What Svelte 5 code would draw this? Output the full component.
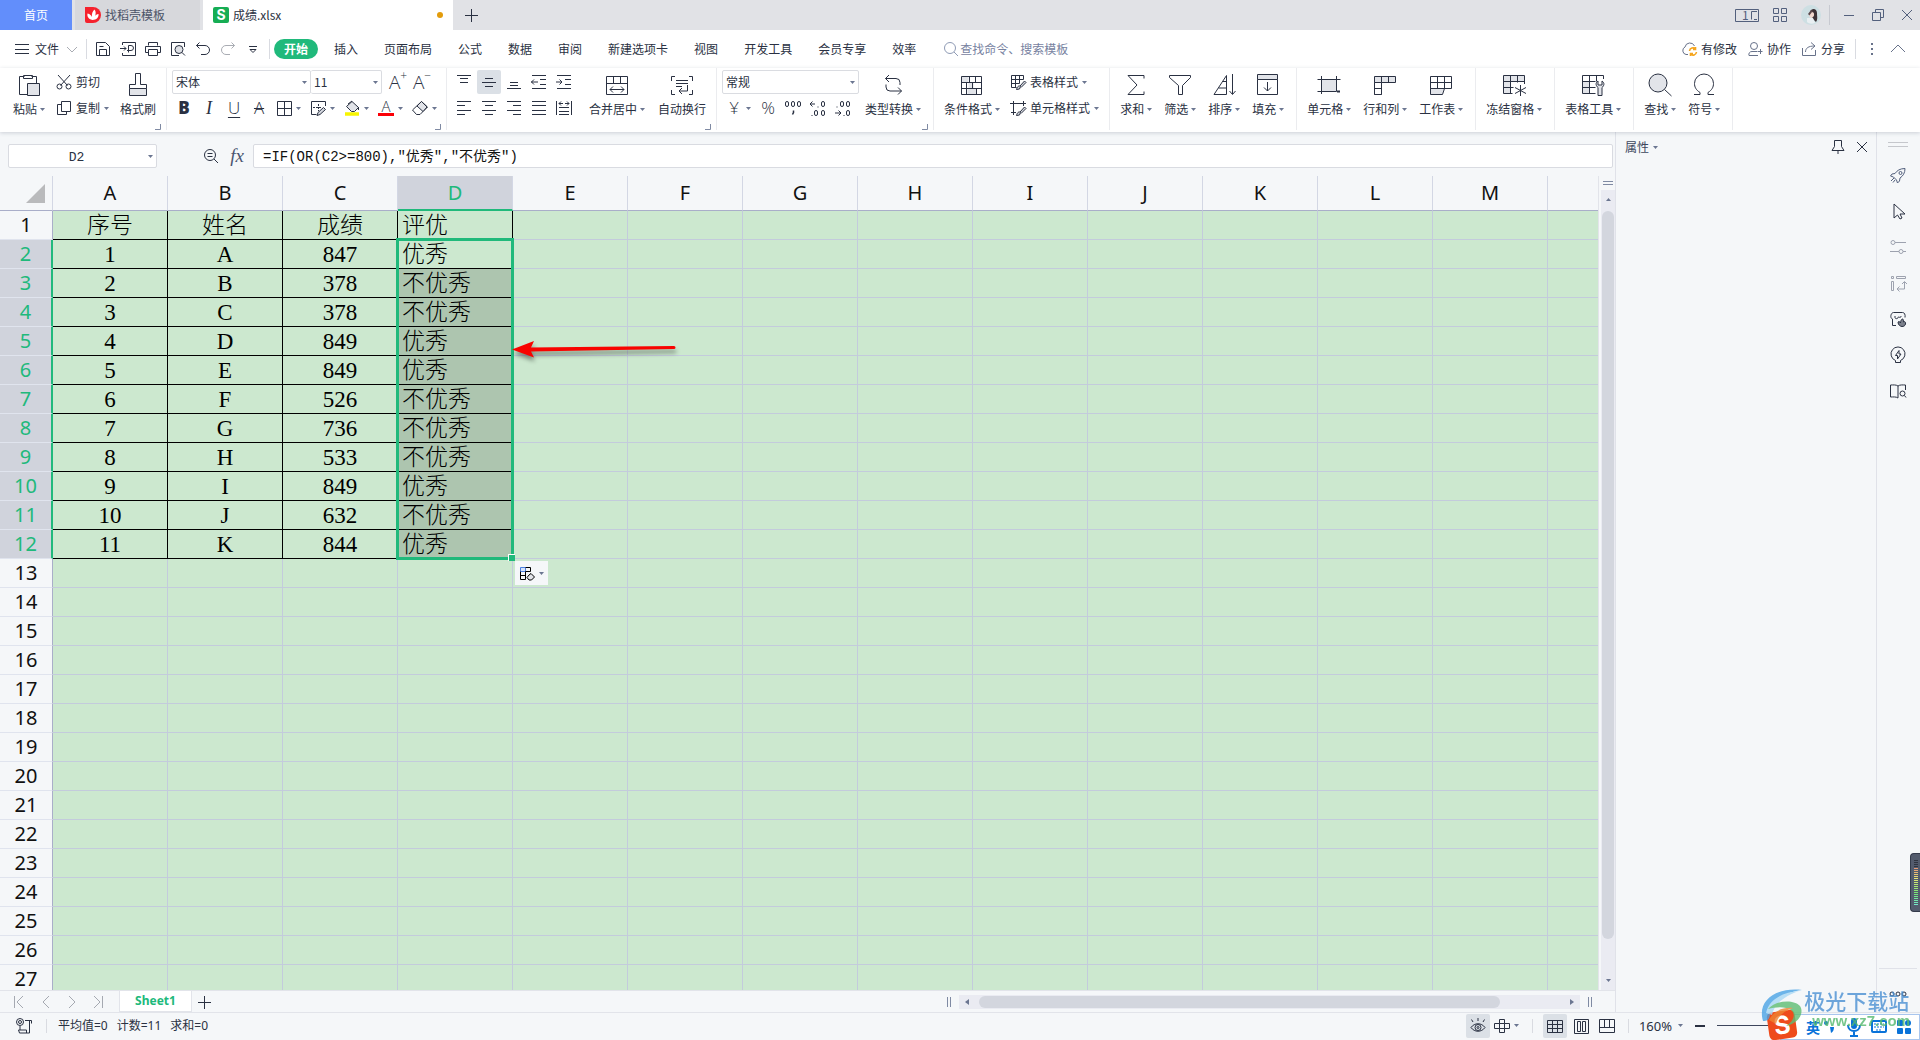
<script lang="ts">
	interface Tool {
		icon: string;
		label: string;
		caret?: boolean;
	}

	const icons: Record<string, string> = {
		// quick access
		menu: '<path d="M1 3.500h14M1 8.500h14M1 12.500h14"/>',
		save: '<path d="M1.500 1.500h9l4 4v9h-13zM4.500 14.500v-6h7v6M4.500 5.500h4"/>',
		pdf: '<path d="M2.500 4V1.500h13v13h-13V12M0 7.500h6M4 5.500l2 2-2 2M8.500 11.500v-7h2.500a2 2 0 0 1 0 5H7"/>',
		print: '<path d="M3.500 4.500v-3h9v3M3.500 11.500h-3v-6h15v6h-3M3.500 8.500h9v6h-9z"/>',
		preview: '<path d="M14.500 6V1.500h-13v13H9"/><circle cx="9" cy="8.500" r="4" fill="#dfe1e6"/><path d="M12 11.500l3 3"/>',
		undo: '<path d="M4.500 1.500l-3 3 3 3M1.500 4.500h8.500a4.500 4.500 0 0 1 0 9H6"/>',
		redo: '<path d="M11.500 1.500l3 3-3 3M14.500 4.500H6a4.500 4.500 0 0 0 0 9h4"/>',
		more: '<path d="M4 5.500h8M5 8.500l3 3 3-3z"/>',
		chevronDown: '<path d="M3 6l5 5 5-5"/>',
		chevronUp: '<path d="M1 11l7-7 7 7"/>',
		search: '<circle cx="7" cy="7" r="5.500"/><path d="M11 11l4 4"/>',
		cloud: '<path d="M7 13.500H5a4 4 0 0 1-1-7.500 5 5 0 0 1 9.500-1"/><path d="M8.500 10a3.500 3.500 0 0 1 6-2M15.500 11a3.500 3.500 0 0 1-6 2M14.500 6v2.500H12M9.500 15v-2.500H12" stroke="#f5a51d" stroke-width="1.600"/>',
		user: '<circle cx="7" cy="5" r="3.500"/><path d="M10 10.500H5a3 3 0 0 0-3 4h9M10.500 10.500h5M13.500 8v5"/>',
		share: '<path d="M1.500 7v7.500h13V9M4.500 11c0-4 3-6 9-6M10 1.500l4 3.500-4 3.500"/>',
		dots: '<g fill="currentColor" stroke="none"><rect x="7" y="2" width="2" height="2"/><rect x="7" y="7" width="2" height="2"/><rect x="7" y="12" width="2" height="2"/></g>',
		// clipboard
		paste: '<path d="M7.500 3.500h-5v18h8M14.500 3.500h5v7"/><path d="M6.500 2.500h9v3h-9z"/><path d="M10.500 10.500h12v12h-12z" fill="#e2e4e9"/>',
		cut: '<path d="M2 1l9.500 10.500M14 1L4.500 11.500"/><circle cx="3.500" cy="12.500" r="2.500"/><circle cx="12.500" cy="12.500" r="2.500"/>',
		copy: '<path d="M5.500 1.500h9v10h-9zM5.500 4.500h-4v10h9v-3"/>',
		brush: '<path d="M3.500 15.500h17v7h-17z" fill="#e2e4e9"/><path d="M3.500 15.500v-4h6v-11h5v11h6v4"/>',
		// font
		borders: '<path d="M1.500 1.500h14v14h-14zM8.500 1.500v14M1.500 8.500h14"/>',
		drawBorder: '<path d="M15.500 6V1.500h-14v13h5"/><path d="M3 7.500h8M8.500 4v7" stroke-dasharray="2 1"/><path d="M7 15.500l1-3 5.500-5 2 2-5.500 5z" fill="#d4d7de"/>',
		fill: '<path d="M8 1.500L2.500 6.500l5 5h3l4-4z" fill="#e2e4e9"/><path d="M8 1l-4 3M14.500 7v3"/><path d="M1 14h14" stroke="#f7f500" stroke-width="3.500"/>',
		eraser: '<path d="M.5 10L9.500 1.500l6 5.500-7.500 7.500H4.500z"/><path d="M5 6l6 5.500 4-4.500-5.500-5.500z" fill="#e2e4e9"/>',
		// alignment
		top: '<path d="M1 1.500h14M4 4.500h8M4 8.500h8"/>',
		middle: '<path d="M4 4.500h8M1 8.500h14M4 12.500h8"/>',
		bottom: '<path d="M4 8.500h8M4 11.500h8M1 14.500h14"/>',
		outdent: '<path d="M1 1.500h14M9 5.500h6M9 10.500h6M1 14.500h14M0 8h7M3 5.500L.500 8 3 10.500"/>',
		indent: '<path d="M1 1.500h14M9 5.500h6M9 10.500h6M1 14.500h14M0 8h6M3.500 5.500L6 8l-2.500 2.500"/>',
		left: '<path d="M1 1.500h14M1 5.500h8M1 10.500h14M1 14.500h8"/>',
		center: '<path d="M1 1.500h14M4 5.500h8M1 10.500h14M4 14.500h8"/>',
		right: '<path d="M1 1.500h14M7 5.500h8M1 10.500h14M7 14.500h8"/>',
		justify: '<path d="M1 1.500h14M1 5.500h14M1 10.500h14M1 14.500h14"/>',
		distribute: '<path d="M.500 1v14M15.500 1v14M3 7.500h10M3 11.500h10M3 14.500h10M3 3.500h4M9 3.500h4M5 1.500l-2 2 2 2M11 1.500l2 2-2 2"/>',
		merge: '<path d="M1.500 3.500h21v18h-21zM1.500 10.500h21M8.500 3.500v7M15.500 3.500v7M5 16.500h14M8 13.500l-3 3 3 3M16 13.500l3 3-3 3"/>',
		wrap: '<path d="M5 3.500H1.500V8M19 3.500h3.500V8M5 21.500H1.500V17M19 21.500h3.500V17M6 7.500h12M6 10.500h12M6 13.500h6M17.500 12v6H9M12 15l-3 3 3 3"/>',
		// number
		incDecimal: '<path d="M0 4h5M2.500 1.500L0 4l2.500 2.500M8 6.500v1"/><rect x="11.500" y="1.500" width="3" height="5" rx="1.500"/><rect x="4.500" y="10.500" width="3" height="5" rx="1.500"/><rect x="11.500" y="10.500" width="3" height="5" rx="1.500"/><path d="M2 15v1"/>',
		decDecimal: '<path d="M0 13h6M3.500 10.500L6 13l-2.500 2.500M9 15v1M2 6.500v1"/><rect x="5.500" y="1.500" width="3" height="5" rx="1.500"/><rect x="11.500" y="1.500" width="3" height="5" rx="1.500"/><rect x="11.500" y="10.500" width="3" height="5" rx="1.500"/>',
		thousands: '<rect x=".500" y="1.500" width="3" height="5" rx="1.500"/><rect x="6.500" y="1.500" width="3" height="5" rx="1.500"/><rect x="12.500" y="1.500" width="3" height="5" rx="1.500"/><path d="M8.500 10.500v2l-1 2" stroke-width="1.500"/>',
		convert: '<path d="M8 2L4.500 5.500 8 9M4.500 5.500H15a4 4 0 0 1 4 4V12M17 14.500l3.500 3.500-3.500 3.500M20.500 18H9a4 4 0 0 1-4-4v-2.500"/>',
		// styles
		condition: '<path d="M1.500 3.500h7v6h-7zM8.500 9.500h5v6h-5zM7.500 15.500h9v6h-9z" fill="#e2e4e9" stroke="none"/><path d="M1.500 3.500h20v18h-20zM1.500 9.500h20M1.500 15.500h20M9.500 3.500v6M15.500 3.500v6M6.500 9.500v12M12.500 9.500v6M16.500 15.500v6"/>',
		tableStyle: '<path d="M1.500 1.500h12v4M1.500 1.500v12h5M1.500 5.500h12M1.500 9.500h8M5.500 1.500v12M9.500 1.500v8"/><path d="M6.500 15.500c1-4 3-4 4-3l-1 2.500zM10 12l4.500-5 1.500 1.500-5 5" fill="#d4d7de"/>',
		cellStyle: '<path d="M0 3.500h16M3.500 1v14M13.500 1v5M1 12.500h5"/><path d="M6.500 15.500c1-4 3-4 4-3l-1 2.500zM10 12l4.500-5 1.500 1.500-5 5" fill="#d4d7de"/>',
		// editing
		sum: '<path d="M20 5.500v-3H4l9 9.500-9 9.500h16v-3"/>',
		filter: '<path d="M1.500 2.500h21v2l-8 8v9h-4v-9l-9-8z"/>',
		sort: '<path d="M2 21.500L14.500 2.500v19zM10.500 8.500h4M6.500 15h8M20.500 1v20M17.500 18l3 3.500 3-3.500"/>',
		fillDown: '<path d="M1.500 1.500h20v5h-20z" fill="#e2e4e9"/><path d="M1.500 6.500v15h20v-15M11.500 9v9M8 14.500l3.500 3.500 3.500-3.500"/>',
		cell: '<path d="M4.500 6.500h15v12h-15z" fill="#e2e4e9"/><path d="M.5 6.500h23M.5 18.500h18M4.500 3v18M19.500 3v14"/><path d="M20 18.500h3" stroke-width="2"/>',
		rowcol: '<path d="M1.500 3.500h21v6h-14v12h-7z" fill="#e2e4e9"/><path d="M1.500 9.500h7v12h-7z" fill="#fff"/><path d="M8.500 3.500v6M15.500 3.500v6M1.500 15.500h7"/>',
		worksheet: '<path d="M1.500 15.500h14l-2 6h-12z" fill="#e2e4e9"/><path d="M1.500 3.500h21v12h-21zM1.500 9.500h21M8.500 3.500v12M15.500 3.500v12"/>',
		freeze: '<path d="M1.500 2.500h21v6h-14v12h-7z" fill="#e2e4e9" stroke="none"/><path d="M22.500 11V2.500h-21v18h9M1.500 8.500h21M1.500 14.500h10M8.500 2.500v18M15.500 2.500v7M18.500 12v11M13 14.500l11 6M24 14.500l-11 6"/>',
		tableTool: '<path d="M1.500 8.500h7v12h-7z" fill="#e2e4e9" stroke="none"/><path d="M22.500 6V2.500h-21v18h13M1.500 8.500h13M1.500 14.500h13M8.500 2.500v18M15.500 2.500v6"/><path d="M17 8c-3 2-2 5 0 6.500v8h4v-8c2-1.500 3-4.500 0-6.500v4h-4z" fill="#e2e4e9"/>',
		find: '<circle cx="10" cy="10" r="9" fill="#e2e4e9"/><path d="M16.500 16.500l7 6.500"/>',
		symbol: '<path d="M2 21.500h6v-2C4 17 2.500 14 2.500 10.500a9.500 9.500 0 0 1 19 0c0 3.500-1.500 6.500-5.500 9v2h6"/>',
		// side panel
		pin: '<path d="M4.500 1.500h7v6l2.500 4H2l2.500-4zM8 11.500V15"/>',
		close: '<path d="M3 3l10 10M13 3L3 13"/>',
		rocket: '<path d="M15 1.500c-5 0-8 2-10 5l-3 .5L.500 9l3 1 3 3 1 3L9.500 14l.5-3c3-2 5-5 5-9.500z"/><circle cx="10.500" cy="6" r="1.500"/><path d="M4 11l-3 3M5 13l-2 2.500"/>',
		pointer: '<path d="M4 1v14l3.500-3 2.500 4 2-1-2-4h5z"/>',
		sliders: '<circle cx="3" cy="3.500" r="2"/><path d="M5 3.500h11M0 12.500h9M13 12.500h3"/><circle cx="11" cy="12.500" r="2"/>',
		transpose: '<path d="M1.500 1.500h2v2h-2zM6.500 1.500h9v2h-9zM1.500 6.500h2v9h-2zM14.500 7v7H7M12 9l2.500-2.500L17 9M9.500 11.500L7 14l2.500 2.500"/>',
		shop: '<path d="M6 14.500H2.500V8c-3-1-1.500-6.500 1-6.500h9c2 0 3 2 2.500 5M5 5v1.500c0 1.500 3 1.500 3 0s3 1.500 3-1.500"/><path d="M8 11c1-1 2 0 2.500 1 0-2 1-4 2-4s1 2 1 3c1-1 2.500 0 2 2s-2 2.500-3.500 2.500S8 14 8 11z" fill="currentColor" fill-opacity=".6"/>',
		bulb: '<path d="M5.500 15.500v-2a7 7 0 1 1 5 0v2zM9 3.500L5.500 8.500h2v3.500l3.500-5H9z"/>',
		book: '<path d="M8 14.500V3C6 1.500 3 2 .500 2v12c2.500 0 5.500-.5 7.500 1zM8 3c2-1.500 5-1 7.500-1v5"/><circle cx="12.500" cy="10.500" r="2.500"/><path d="M14.500 12.500l1.500 2"/>',
		// formula and status bars
		zoomOut: '<circle cx="7" cy="7" r="5.500"/><path d="M11 11l4 4M4.500 5.500h5M4.500 8.500h5"/>',
		first: '<path d="M2.500 2v12M11 2L5 8l6 6"/>',
		prev: '<path d="M11 2L5 8l6 6"/>',
		next: '<path d="M5 2l6 6-6 6"/>',
		last: '<path d="M4 2l6 6-6 6M12.500 2v12"/>',
		plus: '<path d="M8.500 2v13M2 8.500h13"/>',
		macro: '<circle cx="4" cy="4" r="3.500"/><circle cx="4" cy="4" r="1.500"/><path d="M9 2.500h6.500v3M13.500 3v12h-10l-1-3h8v3M4 8v4"/>',
		eye: '<path d="M1 9.500c3.500-5 10.500-5 14 0-3.500 5-10.500 5-14 0zM3 4L1.500 1.500M8 3V0M13 4l1.500-2.500"/><circle cx="8" cy="9.500" r="3"/><circle cx="8" cy="9.500" r="1"/>',
		cross: '<path d="M5.500 1.500h5v4h5v5h-5v4h-5v-4h-5v-5h5zM5.500 5.500h5v5h-5z"/>',
		grid: '<path d="M.500 2.500h15v12h-15zM.500 6.500h15M.500 10.500h15M5.500 2.500v12M10.500 2.500v12"/>',
		pages: '<path d="M1.500 1.500h14v14h-14zM4.500 3.500h3v10h-3zM9.500 3.500h3v10h-3z"/>',
		split: '<path d="M.500 1.500h15v13h-15zM.500 9.500h15M5.500 1.500v8M10.500 1.500v8"/>',
		pasteOption: '<path d="M1.500 2.500h5v4h-5z" fill="#d6e4fb" stroke="#4a7fe0"/><path d="M6.500 2.500h5v4h-5M1.500 6.500v8h5v-8M1.500 10.500h5"/><path d="M12 8.500l3.500 3.500-3 3H10l-2-2.500L10 10z" fill="#e2e4e9"/>'
	};

	const tabs = ['插入', '页面布局', '公式', '数据', '审阅', '新建选项卡', '视图', '开发工具', '会员专享', '效率'];
	const quick = ['save', 'pdf', 'print', 'preview', 'undo', 'redo', 'more'];
	const alignTop = ['top', 'middle', 'bottom', 'outdent', 'indent'];
	const alignBottom = ['left', 'center', 'right', 'justify', 'distribute'];
	const groups: Tool[][] = [
		[
			{ icon: 'sum', label: '求和' },
			{ icon: 'filter', label: '筛选' },
			{ icon: 'sort', label: '排序' },
			{ icon: 'fillDown', label: '填充' }
		],
		[
			{ icon: 'cell', label: '单元格' },
			{ icon: 'rowcol', label: '行和列' },
			{ icon: 'worksheet', label: '工作表' }
		],
		[{ icon: 'freeze', label: '冻结窗格' }],
		[{ icon: 'tableTool', label: '表格工具' }],
		[
			{ icon: 'find', label: '查找' },
			{ icon: 'symbol', label: '符号' }
		]
	];
	const sideTools = ['rocket', 'pointer', 'sliders', 'transpose', 'shop', 'bulb', 'book'];

	const columns = [...'ABCDEFGHIJKLM', ''];
	const rowCount = 27;
	const good = '优秀';
	const bad = '不优秀';
	const data = [
		['序号', '姓名', '成绩', '评优'],
		['1', 'A', '847', good],
		['2', 'B', '378', bad],
		['3', 'C', '378', bad],
		['4', 'D', '849', good],
		['5', 'E', '849', good],
		['6', 'F', '526', bad],
		['7', 'G', '736', bad],
		['8', 'H', '533', bad],
		['9', 'I', '849', good],
		['10', 'J', '632', bad],
		['11', 'K', '844', good]
	];

	let formula = $state('=IF(OR(C2>=800),"优秀","不优秀")');
	let cellName = $state('D2');
</script>

{#snippet icon(name: string, size = 16)}
	<svg class="icon" width={size} height={size} viewBox="0 0 {size} {size}" aria-hidden="true">{@html icons[name]}</svg>
{/snippet}

{#snippet caret()}
	<svg class="caret" width="5" height="3" viewBox="0 0 5 3" aria-hidden="true"><path d="M0 0h5L2.500 3z" /></svg>
{/snippet}

{#snippet big(tool: Tool)}
	<button class="big">
		{@render icon(tool.icon, 24)}
		<span class="label">{tool.label}{#if tool.caret !== false}{@render caret()}{/if}</span>
	</button>
{/snippet}

{#snippet corner()}
	<svg class="corner" width="6" height="6" viewBox="0 0 6 6" aria-hidden="true"><path d="M5.500 0v5.500H0" /></svg>
{/snippet}

<div class="app">
	<header class="titlebar">
		<button class="doc home">首页</button>
		<button class="doc template">
			<svg width="16" height="16" viewBox="0 0 16 16" aria-hidden="true">
				<path d="M0 0h8a8 8 0 0 1 0 16H2a2 2 0 0 1-2-2z" fill="#f5222d" />
				<path d="M7.500 13C3 12 2 9 2.500 6.500 5 7 6.500 8.500 7 10 6.500 7 7.500 4 9.500 2.500c1.500 2 1.500 4.500.5 6.500.7-1 1.800-2 3.500-2 .5 3-2 6-6 6z" fill="#fff" />
			</svg>
			找稻壳模板
		</button>
		<button class="doc active">
			<span class="logo">S</span>
			成绩.xlsx
			<i class="unsaved"></i>
		</button>
		<button class="tool add" aria-label="新建">{@render icon('plus')}</button>
		<div class="window">
			<svg width="24" height="15" viewBox="0 0 24 15" aria-hidden="true">
				<path d="M.500 1.500h23v12H.500zM22 3.500h-5.500v8M19 11.500h3" />
				<text x="7" y="12" font-size="12">1</text>
			</svg>
			<svg width="16" height="16" viewBox="0 0 16 16" aria-hidden="true">
				<path d="M1.500 1.500h5v5h-5zM9.500 1.500h5v5h-5zM1.500 9.500h5v5h-5zM9.500 9.500h5v5h-5z" />
			</svg>
			<svg width="20" height="20" viewBox="0 0 20 20" aria-hidden="true">
				<circle cx="10" cy="10" r="10" fill="#cddfe3" stroke="none" />
				<path d="M9 7c1-4 7-4 7 1 0 4 1 6-1 9l-3-3z" fill="#3a3034" stroke="none" />
				<path d="M7 9l3-4 2 1-3 5z" fill="#5b484c" stroke="none" />
				<path d="M8 11l3-4c2 0 3 3 1 5l-2 1z" fill="#efd6cc" stroke="none" />
				<path d="M6 13l6 0 2 5c-3 1-6 1-8-1z" fill="#e9eff2" stroke="none" />
			</svg>
			<i class="rule"></i>
			<button class="tool" aria-label="最小化"><svg width="12" height="12" viewBox="0 0 12 12"><path d="M1 6.500h10" /></svg></button>
			<button class="tool" aria-label="还原"><svg width="12" height="12" viewBox="0 0 12 12"><path d="M3.500 3.500v-3h8v8h-3M.500 3.500h8v8h-8z" /></svg></button>
			<button class="tool" aria-label="关闭"><svg width="12" height="12" viewBox="0 0 12 12"><path d="M1 1l10 10M11 1L1 11" /></svg></button>
		</div>
	</header>

	<nav class="menubar">
		<button class="file">{@render icon('menu')}文件<span class="faint">{@render icon('chevronDown')}</span></button>
		<i class="rule"></i>
		<div class="quick">
			{#each quick as name}
				<button class="tool" class:faint={name === 'redo'} aria-label={name}>{@render icon(name)}</button>
			{/each}
		</div>
		<i class="rule"></i>
		<button class="pill">开始</button>
		{#each tabs as tab}
			<button class="tab">{tab}</button>
		{/each}
		<label class="search">
			{@render icon('search')}
			<input type="text" placeholder="查找命令、搜索模板" />
		</label>
		<div class="account">
			<button>{@render icon('cloud')}有修改</button>
			<button>{@render icon('user')}协作</button>
			<button>{@render icon('share')}分享</button>
			<i class="rule"></i>
			<button aria-label="更多">{@render icon('dots')}</button>
			<button aria-label="收起">{@render icon('chevronUp')}</button>
		</div>
	</nav>

	<div class="ribbon">
		<section class="group clipboard">
			{@render big({ icon: 'paste', label: '粘贴' })}
			<div class="stack">
				<button class="line">{@render icon('cut')}剪切</button>
				<button class="line">{@render icon('copy')}复制{@render caret()}</button>
			</div>
			{@render big({ icon: 'brush', label: '格式刷', caret: false })}
			{@render corner()}
		</section>

		<section class="group tight">
			<div class="stack">
				<div class="row fonts">
					<span class="select family"><select aria-label="字体"><option>宋体</option></select>{@render caret()}</span>
					<span class="select size"><select aria-label="字号"><option>11</option></select>{@render caret()}</span>
					<button class="tool thin" aria-label="增大字号">A<sup>+</sup></button>
					<button class="tool thin" aria-label="减小字号">A<sup>−</sup></button>
				</div>
				<div class="row">
					<button class="tool glyph bold">B</button>
					<button class="tool glyph italic">I</button>
					<button class="tool glyph under">U</button>
					<button class="tool glyph strike">A</button>
					<button class="drop" aria-label="边框">{@render icon('borders')}{@render caret()}</button>
					<button class="drop" aria-label="绘图边框">{@render icon('drawBorder')}{@render caret()}</button>
					<button class="drop" aria-label="填充颜色">{@render icon('fill')}{@render caret()}</button>
					<button class="drop"><span class="color">A</span>{@render caret()}</button>
					<button class="drop" aria-label="清除">{@render icon('eraser')}{@render caret()}</button>
				</div>
			</div>
			{@render corner()}
		</section>

		<section class="group tight align">
			<div class="stack">
				<div class="row">
					{#each alignTop as name}
						<button class="tool" class:pressed={name === 'middle'} aria-label={name}>{@render icon(name)}</button>
					{/each}
				</div>
				<div class="row">
					{#each alignBottom as name}
						<button class="tool" aria-label={name}>{@render icon(name)}</button>
					{/each}
				</div>
			</div>
			{@render big({ icon: 'merge', label: '合并居中' })}
			{@render big({ icon: 'wrap', label: '自动换行', caret: false })}
			{@render corner()}
		</section>

		<section class="group number">
			<div class="stack">
				<span class="select format"><select aria-label="数字格式"><option>常规</option></select>{@render caret()}</span>
				<div class="row">
					<button class="drop"><span class="yen">¥</span>{@render caret()}</button>
					<button class="tool yen">%</button>
					<button class="tool" aria-label="千位分隔">{@render icon('thousands')}</button>
					<button class="tool" aria-label="增加小数位">{@render icon('incDecimal')}</button>
					<button class="tool" aria-label="减少小数位">{@render icon('decDecimal')}</button>
				</div>
			</div>
			{@render big({ icon: 'convert', label: '类型转换' })}
			{@render corner()}
		</section>

		<section class="group styles">
			{@render big({ icon: 'condition', label: '条件格式' })}
			<div class="stack">
				<button class="line">{@render icon('tableStyle')}表格样式{@render caret()}</button>
				<button class="line">{@render icon('cellStyle')}单元格样式{@render caret()}</button>
			</div>
		</section>

		{#each groups as group}
			<section class="group">
				{#each group as tool}
					{@render big(tool)}
				{/each}
			</section>
		{/each}
	</div>

	<div class="body">
		<main class="workspace">
			<div class="formulabar">
				<span class="namebox"><input type="text" aria-label="名称框" bind:value={cellName} />{@render caret()}</span>
				<button class="tool" aria-label="缩小">{@render icon('zoomOut')}</button>
				<button class="tool fx">fx</button>
				<input class="formula" type="text" aria-label="编辑栏" bind:value={formula} />
			</div>

			<div class="sheet">
				<div class="cells">
					<table>
						<colgroup>
							<col class="rowhead" />
							{#each columns as _}<col class="column" />{/each}
						</colgroup>
						<thead>
							<tr>
								<th class="all"><svg width="19" height="19" viewBox="0 0 19 19" aria-hidden="true"><path d="M19 0v19H0z" fill="#b9babc" /></svg></th>
								{#each columns as name}
									<th class:selected={name === 'D'}>{name}</th>
								{/each}
							</tr>
						</thead>
						<tbody>
							{#each { length: rowCount } as _, r}
								<tr>
									<th class:selected={r > 0 && r < data.length}>{r + 1}</th>
									{#each columns as _, c}
										<td class:filled={r < data.length && c < 4} class:result={c === 3} class:shade={c === 3 && r > 1 && r < data.length}>
											{data[r]?.[c] ?? ''}
											{#if r === 1 && c === 3}<i class="range"></i>{/if}
											{#if r === 4 && c === 3}
												<svg class="arrow" width="170" height="30" viewBox="0 0 170 30" aria-hidden="true">
													<path d="M0 15.500L22 7l-3 6.500L162 12a1 1 0 0 1 0 3L19 17.500l3 6z" fill="#f80300" />
												</svg>
											{/if}
											{#if r === 11 && c === 3}
												<button class="options" aria-label="填充选项">{@render icon('pasteOption')}{@render caret()}</button>
											{/if}
										</td>
									{/each}
								</tr>
							{/each}
						</tbody>
					</table>
				</div>
				<div class="vscroll">
					<i class="splitter"></i>
					<div class="track">
						<span class="up">{@render caret()}</span>
						<i class="thumb"></i>
						{@render caret()}
					</div>
				</div>
			</div>

			<div class="sheetbar">
				<div class="pager">
					{#each ['first', 'prev', 'next', 'last'] as name}
						<button class="tool" aria-label={name}>{@render icon(name)}</button>
					{/each}
				</div>
				<button class="sheettab">Sheet1</button>
				<button class="tool" aria-label="新建工作表">{@render icon('plus')}</button>
				<div class="hscroll">
					<i class="grip"></i>
					<div class="track">
						<svg width="4" height="6" viewBox="0 0 4 6" aria-hidden="true"><path d="M4 0v6L0 3z" /></svg>
						<i class="thumb"></i>
						<svg width="4" height="6" viewBox="0 0 4 6" aria-hidden="true"><path d="M0 0v6l4-3z" /></svg>
					</div>
					<i class="grip"></i>
				</div>
			</div>
		</main>

		<aside class="panel">
			<button class="title">属性{@render caret()}</button>
			<button class="tool" aria-label="固定">{@render icon('pin')}</button>
			<button class="tool" aria-label="关闭">{@render icon('close')}</button>
		</aside>

		<aside class="strip">
			<i class="handle"></i>
			{#each sideTools as name}
				<button class="tool {name}" aria-label={name}>{@render icon(name)}</button>
			{/each}
			<div class="meter">
				{#each { length: 23 } as _, i}
					<i style="background: {i < 4 ? '#2f3440' : `hsl(${20 + (i - 4) * 8}, 70%, 68%)`}"></i>
				{/each}
			</div>
			<div class="overflow">
				<svg width="18" height="6" viewBox="0 0 18 6" aria-hidden="true"><circle cx="3" cy="3" r="2" /><circle cx="9" cy="3" r="2" /><circle cx="15" cy="3" r="2" /></svg>
			</div>
		</aside>
	</div>

	<footer class="statusbar">
		<button class="tool" aria-label="宏">{@render icon('macro')}</button>
		<i class="rule"></i>
		<p><span>平均值=0</span><span>计数=11</span><span>求和=0</span></p>
		<div class="views">
			<button class="tool pressed" aria-label="护眼模式">{@render icon('eye')}</button>
			<button class="drop" aria-label="阅读模式">{@render icon('cross')}{@render caret()}</button>
			<i class="rule"></i>
			<button class="tool pressed" aria-label="普通视图">{@render icon('grid')}</button>
			<button class="tool" aria-label="页面布局">{@render icon('pages')}</button>
			<button class="tool" aria-label="分页预览">{@render icon('split')}</button>
			<i class="rule"></i>
			<button class="percent">160%{@render caret()}</button>
			<button class="minus" aria-label="缩小"></button>
			<i class="slider"></i>
		</div>
	</footer>

	<div class="ime">
		<span class="sogou">S</span>
		<b>英</b>
		<svg width="92" height="20" viewBox="0 0 92 20" aria-hidden="true">
			<circle cx="4" cy="6" r="2" /><path d="M8 10h4c0 3-1 5-3 6z" />
			<rect x="29" y="1" width="6" height="11" rx="3" /><path d="M26 8c0 8 12 8 12 0M32 14v5M28 19h8" fill="none" stroke="#0a73d9" stroke-width="2" />
			<rect x="50" y="4" width="14" height="11" rx="1" fill="none" stroke="#0a73d9" stroke-width="2" /><path d="M52 7h10M52 10h10M54 13h6" stroke="#0a73d9" stroke-dasharray="2 1" />
			<rect x="75" y="3" width="6" height="6" rx="1" /><rect x="83" y="3" width="6" height="6" rx="3" /><rect x="75" y="11" width="6" height="6" rx="1" /><rect x="83" y="11" width="6" height="6" rx="1" />
		</svg>
	</div>

	<div class="watermark">
		<svg width="42" height="42" viewBox="0 0 42 42" aria-hidden="true">
			<path d="M2 32C-4 12 14-2 41 1 24 3 10 12 9 24c0 6-2 8-7 8z" fill="#4aa4e6" />
			<path d="M5 24C8 9 24 3 38 2 26 6 13 14 11 26z" fill="#a8d8f5" />
			<path d="M7 20c8-9 26-10 32-3 5 8-3 18-14 20 8-5 10-12 5-16-6-4-15-3-23-1z" fill="#5dbd73" />
			<path d="M8 31c5-10 15-13 24-12-9 3-15 8-17 16z" fill="#ee8430" />
		</svg>
		<div><strong>极光下载站</strong><span>www.xz7.com</span></div>
	</div>
</div>

<style>
	:global(body) {
		margin: 0;
	}

	.app {
		position: relative;
		display: flex;
		flex-direction: column;
		height: 100vh;
		overflow: hidden;
		background: #f5f7f9;
		color: #2a3142;
		font: 12px/16px "Noto Sans CJK SC", sans-serif;
	}

	.app * {
		box-sizing: border-box;
	}

	button,
	input,
	select {
		margin: 0;
		padding: 0;
		border: 0;
		background: none;
		color: inherit;
		font: inherit;
		white-space: nowrap;
	}

	svg {
		flex: none;
	}

	.icon,
	.corner,
	.window svg {
		display: block;
		fill: none;
		stroke: currentColor;
		overflow: visible;
	}

	.caret {
		fill: #6b7691;
	}

	.tool {
		display: flex;
		align-items: center;
		justify-content: center;
		flex: none;
		width: 24px;
		height: 24px;
	}

	.pressed {
		background: #dbe0e6;
		border-radius: 2px;
	}

	.faint {
		color: #a9acb3;
	}

	.rule {
		flex: none;
		width: 1px;
		height: 20px;
		background: #d9dbe1;
	}

	/* title bar */
	.titlebar {
		display: flex;
		flex: none;
		height: 30px;
		background: #e1e2e6;
	}

	.doc {
		display: flex;
		align-items: center;
		gap: 4px;
		height: 30px;
		margin-right: 3px;
		padding: 0 10px;
	}

	.doc.home {
		justify-content: center;
		width: 72px;
		background: #628efb;
		color: #fff;
	}

	.doc.template {
		width: 125px;
		background: #d7d8dc;
		color: #4c5468;
	}

	.doc.active {
		width: 250px;
		margin: 0;
		background: #fff;
	}

	.logo {
		width: 16px;
		height: 16px;
		border-radius: 2px;
		background: #16ad54;
		color: #fff;
		font: bold 14px/16px "Inter", sans-serif;
		text-align: center;
	}

	.unsaved {
		width: 6px;
		height: 6px;
		margin-left: auto;
		border-radius: 50%;
		background: #e39c0b;
	}

	.add {
		margin: 3px 6px;
	}

	.window {
		display: flex;
		align-items: center;
		gap: 13px;
		margin-left: auto;
		padding-right: 5px;
		color: #53607d;
	}

	.window text {
		fill: #53607d;
		stroke: none;
	}

	.window .tool {
		width: 16px;
	}

	.window .rule {
		margin: 0 -2px 0 -5px;
		background: #c7c9d0;
	}

	/* menu bar */
	.menubar {
		display: flex;
		align-items: center;
		flex: none;
		height: 38px;
		padding: 0 14px;
		background: #fff;
	}

	.file {
		display: flex;
		align-items: center;
		gap: 5px;
		width: 72px;
	}

	.quick {
		display: flex;
		gap: 1px;
		padding: 0 4px;
	}

	.pill {
		height: 20px;
		margin: 0 3px 0 4px;
		padding: 0 10px;
		border-radius: 10px;
		background: #20b97b;
		color: #fff;
		font-weight: bold;
	}

	.tab {
		padding: 0 13px;
	}

	.search {
		display: flex;
		align-items: center;
		gap: 1px;
		margin-left: 14px;
		color: #8f9bb5;
	}

	.search input {
		width: 120px;
	}

	.search input::placeholder {
		color: #77829f;
		opacity: 1;
	}

	.account {
		display: flex;
		align-items: center;
		gap: 10px;
		margin-left: auto;
	}

	.account button {
		display: flex;
		align-items: center;
		gap: 4px;
	}

	.account .icon {
		color: #68728a;
	}

	.account .rule {
		margin-right: -2px;
	}

	/* ribbon */
	.ribbon {
		position: relative;
		z-index: 1;
		display: flex;
		flex: none;
		height: 64px;
		padding-bottom: 2px;
		background: #fff;
		box-shadow: 0 1px 4px rgba(40, 50, 80, 0.2);
	}

	.group {
		position: relative;
		display: flex;
		gap: 12px;
		padding: 0 12px 0 10px;
		border-right: 1px solid #ebecef;
	}

	.group.clipboard {
		gap: 11px;
		padding: 0 10px 0 13px;
	}

	.group.tight {
		padding: 0 5px;
	}

	.group.align {
		gap: 13px;
		padding-right: 10px;
	}

	.group.number {
		gap: 6px;
		padding-left: 5px;
	}

	.group.styles {
		gap: 10px;
		padding-right: 10px;
	}

	.big {
		display: flex;
		flex-direction: column;
		align-items: center;
		gap: 4px;
		padding-top: 5px;
	}

	.label {
		display: flex;
		align-items: center;
		gap: 3px;
	}

	.corner {
		position: absolute;
		right: 5px;
		bottom: 0;
		stroke: #7f8aa3;
	}

	.stack {
		display: flex;
		flex-direction: column;
		gap: 2px;
		padding-top: 2px;
	}

	.row {
		display: flex;
		gap: 1px;
	}

	.row.fonts {
		gap: 0;
	}

	.line {
		display: flex;
		align-items: center;
		gap: 4px;
		height: 24px;
	}

	.drop {
		display: flex;
		align-items: center;
		gap: 4px;
		height: 24px;
		padding: 0 4px;
	}

	.select {
		position: relative;
		height: 24px;
		border: 1px solid #dadce1;
		border-radius: 2px;
	}

	.select select {
		display: block;
		width: 100%;
		height: 22px;
		padding: 0 3px;
		appearance: none;
	}

	.select .caret,
	.namebox .caret {
		position: absolute;
		top: 10px;
		right: 3px;
		pointer-events: none;
	}

	.family {
		width: 139px;
	}

	.size {
		width: 71px;
		margin-right: 4px;
		border-left: 0;
	}

	.format {
		width: 137px;
	}

	.thin {
		font: 300 19px/24px "Open Sans", sans-serif;
	}

	.thin sup {
		align-self: flex-start;
		font-size: 12px;
		line-height: 12px;
	}

	.glyph {
		font: 300 17px/20px "Open Sans", sans-serif;
	}

	.bold {
		font-weight: 800;
	}

	.italic {
		font: italic 18px/20px "Liberation Serif", serif;
	}

	.under {
		text-decoration: underline;
		text-underline-offset: 3px;
		text-decoration-thickness: 1px;
	}

	.strike {
		text-decoration: line-through;
		text-decoration-thickness: 1px;
	}

	.color {
		width: 16px;
		height: 16px;
		border-bottom: 3px solid #fb0007;
		font: 300 15px/12px "Open Sans", sans-serif;
		text-align: center;
	}

	.yen {
		min-width: 16px;
		font: 300 17px/20px "Open Sans", sans-serif;
	}

	/* workspace */
	.body {
		display: flex;
		flex: 1;
		min-height: 0;
	}

	.workspace {
		display: flex;
		flex-direction: column;
		flex: 1;
		min-width: 0;
	}

	.formulabar {
		display: flex;
		align-items: center;
		flex: none;
		gap: 2px;
		height: 44px;
		padding: 4px 2px 0 8px;
	}

	.namebox {
		position: relative;
		width: 149px;
		height: 24px;
		margin-right: 40px;
		border: 1px solid #d9dbe1;
		border-radius: 2px;
		background: #fff;
	}

	.namebox input {
		width: 100%;
		height: 22px;
		padding: 2px 12px 0 0;
		font: 13px/20px "Liberation Mono", monospace;
		text-align: center;
	}

	.fx {
		margin-right: 2px;
		color: #4a5570;
		font: italic 19px/20px "Liberation Serif", serif;
	}

	.formula {
		flex: 1;
		height: 24px;
		padding: 0 9px 2px;
		border: 1px solid #d9dbe1;
		border-radius: 2px;
		background: #fff;
		color: #111;
		font: 14px/20px "Liberation Mono", "Noto Sans CJK SC", monospace;
	}

	.sheet {
		display: flex;
		flex: 1;
		min-height: 0;
	}

	.cells {
		flex: 1;
		min-width: 0;
		overflow: hidden;
		border-right: 1px solid #e2e4ea;
	}

	table {
		width: max-content;
		table-layout: fixed;
		border-spacing: 0;
	}

	.rowhead {
		width: 53px;
	}

	.column {
		width: 115px;
	}

	th {
		height: 29px;
		padding: 0;
		border-right: 1px solid #d3d7e4;
		border-bottom: 1px solid #e0e4ee;
		color: #111;
		font: 20px/22px "Noto Sans", sans-serif;
	}

	thead th {
		height: 35px;
		border-bottom-color: #a9aec9;
	}

	tbody th {
		border-right-color: #a9aec9;
	}

	th.all svg {
		display: block;
		margin: 1px 0 0 26px;
	}

	th.selected {
		background: #d0d3dc;
		color: #20b97b;
	}

	thead th.selected {
		border-bottom: 2px solid #20b97b;
	}

	tbody th.selected {
		border-right: 2px solid #20b97b;
	}

	td {
		position: relative;
		height: 29px;
		padding: 2px 0 0;
		border-right: 1px solid #c3cbdc;
		border-bottom: 1px solid #c3cbdc;
		background: #cce8cf;
		color: #000;
		font: 300 23px/26px "Liberation Serif", "Noto Sans CJK SC", serif;
		text-align: center;
	}

	td.filled {
		border-color: #000;
	}

	td.filled.result {
		padding-left: 4px;
		text-align: left;
	}

	td.shade {
		background: #adc5af;
	}

	.range {
		position: absolute;
		z-index: 1;
		top: -2px;
		left: -2px;
		width: 118px;
		height: 322px;
		border: 3px solid #20b97b;
		pointer-events: none;
	}

	.range::after {
		content: "";
		position: absolute;
		right: -4px;
		bottom: -4px;
		width: 6px;
		height: 6px;
		border: 1px solid #fff;
		border-width: 1px 0 0 1px;
		background: #20b97b;
	}

	.arrow {
		position: absolute;
		z-index: 2;
		top: 7px;
		left: 114px;
		filter: drop-shadow(1px 4px 2px rgba(0, 0, 0, 0.4));
	}

	.options {
		position: absolute;
		z-index: 2;
		top: 31px;
		left: 117px;
		display: flex;
		align-items: center;
		gap: 4px;
		width: 33px;
		height: 24px;
		padding: 0 4px;
		background: #f5f7f9;
	}

	.vscroll {
		display: flex;
		flex-direction: column;
		align-items: center;
		flex: none;
		width: 16px;
		padding-left: 2px;
	}

	.splitter {
		width: 10px;
		height: 4px;
		margin: 5px 0;
		border: 1px solid #7f8aa3;
		border-width: 1px 0;
	}

	.vscroll .track {
		display: flex;
		flex-direction: column;
		align-items: center;
		flex: 1;
		width: 14px;
		padding: 8px 0;
		background: #eaebf2;
	}

	.up {
		display: flex;
		transform: rotate(180deg);
	}

	.vscroll .thumb {
		flex: 1;
		width: 12px;
		margin: 10px 0 40px;
		border-radius: 6px;
		background: #d3d6de;
	}

	.sheetbar {
		display: flex;
		align-items: center;
		flex: none;
		height: 22px;
		border-top: 1px solid #e2e4ea;
	}

	.pager {
		display: flex;
		gap: 2px;
		padding: 0 9px 0 8px;
		color: #a5a9b1;
	}

	.sheettab {
		width: 73px;
		height: 21px;
		border: 1px solid #e2e4ea;
		border-top: 0;
		background: #fff;
		color: #20b97b;
		font: bold 12px/20px "Noto Sans", sans-serif;
	}

	.hscroll {
		display: flex;
		align-items: center;
		gap: 8px;
		width: 42%;
		margin-left: auto;
		padding: 0 23px 0 10px;
	}

	.grip {
		width: 4px;
		height: 10px;
		border: 1px solid #7f8aa3;
		border-width: 0 1px;
	}

	.hscroll .track {
		display: flex;
		align-items: center;
		flex: 1;
		gap: 10px;
		height: 14px;
		padding: 0 6px;
		background: #eaebf2;
	}

	.hscroll .track svg {
		fill: #6b7691;
	}

	.hscroll .thumb {
		flex: 1;
		height: 12px;
		margin-right: 60px;
		border-radius: 6px;
		background: #d3d6de;
	}

	.panel {
		display: flex;
		align-items: flex-start;
		flex: none;
		width: 262px;
		padding: 3px 2px 0 9px;
		border: 1px solid #e0e2e9;
		border-width: 0 1px;
	}

	.panel .title {
		display: flex;
		align-items: center;
		gap: 4px;
		height: 24px;
		margin-right: auto;
		color: #3d465c;
	}

	.strip {
		position: relative;
		display: flex;
		flex-direction: column;
		align-items: center;
		flex: none;
		gap: 12px;
		width: 43px;
		padding: 10px 2px 0 0;
	}

	.handle {
		width: 20px;
		height: 5px;
		margin-bottom: 4px;
		border: 1px solid #c5c7cc;
		border-width: 1px 0;
	}

	.strip .rocket {
		color: #53607d;
	}

	.strip .sliders,
	.strip .transpose {
		color: #9da2af;
	}

	.meter {
		position: absolute;
		right: 0;
		bottom: 100px;
		display: flex;
		flex-direction: column;
		gap: 1px;
		width: 10px;
		padding: 6px 2px 6px 3px;
		border: 1px solid #343b4b;
		border-right: 0;
		border-radius: 4px 0 0 4px;
		background: #535b6d;
	}

	.meter i {
		height: 1px;
	}

	.overflow {
		display: flex;
		justify-content: center;
		width: 38px;
		height: 44px;
		margin-top: auto;
		padding-top: 22px;
		border-top: 1px solid #e0e2e9;
	}

	.overflow svg {
		fill: none;
		stroke: #2a3142;
	}

	/* status bar */
	.statusbar {
		display: flex;
		align-items: center;
		flex: none;
		height: 28px;
		padding: 0 0 2px 12px;
		border-top: 1px solid #e2e4ea;
	}

	.statusbar .rule {
		height: 14px;
		margin: 0 11px 0 10px;
	}

	.statusbar p {
		display: flex;
		gap: 9px;
		margin: 0;
		font-family: "Noto Sans", "Noto Sans CJK SC", sans-serif;
	}

	.views {
		display: flex;
		align-items: center;
		gap: 2px;
		margin-left: auto;
	}

	.views .rule {
		margin: 0 8px 0 7px;
	}

	.views .drop {
		padding-left: 2px;
	}

	.percent {
		display: flex;
		align-items: center;
		gap: 6px;
		font: 13px/16px "Noto Sans", sans-serif;
	}

	.minus {
		width: 10px;
		height: 2px;
		margin: 0 10px;
		background: #2a3142;
	}

	.slider {
		width: 203px;
		height: 1px;
		background: #3d465c;
	}

	/* floating input method bar */
	.ime {
		position: absolute;
		right: 0;
		bottom: 0;
		display: flex;
		align-items: center;
		gap: 2px;
		width: 140px;
		height: 26px;
		border: 1px solid #a9c6ee;
		background: #fff;
		color: #0a73d9;
		font-size: 14px;
	}

	.ime svg {
		fill: #0a73d9;
	}

	.sogou {
		width: 28px;
		height: 28px;
		margin: 0 8px 4px -13px;
		border-radius: 5px;
		background: #ee4b1c;
		color: #fff;
		font: bold 25px/28px "Inter", sans-serif;
		text-align: center;
		transform: rotate(-8deg);
	}

	.watermark {
		position: absolute;
		right: 10px;
		bottom: 9px;
		display: flex;
		opacity: 0.8;
		pointer-events: none;
	}

	.watermark svg {
		margin-right: 1px;
	}

	.watermark strong,
	.watermark span {
		display: block;
		color: #4a90d3;
		font: 500 21px/22px "Noto Sans CJK SC", sans-serif;
	}

	.watermark span {
		padding-left: 8px;
		color: #55b96f;
		font: bold 15px/20px "Liberation Sans", sans-serif;
	}
</style>
